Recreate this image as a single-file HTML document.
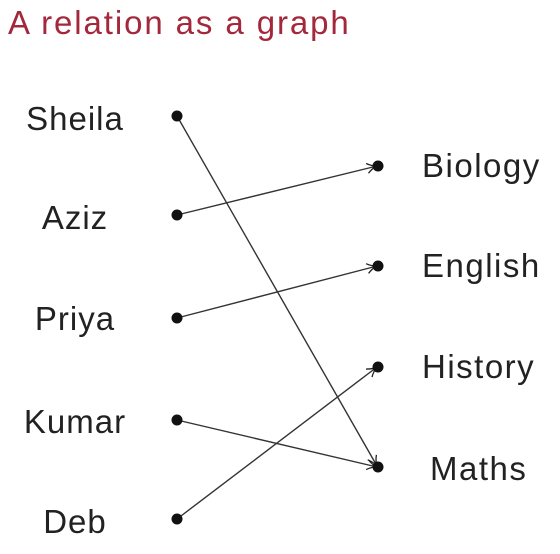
<html><body style="margin:0;background:#fff">
<svg width="560" height="554" xmlns="http://www.w3.org/2000/svg" font-family="Liberation Sans, sans-serif">
<defs><marker id="a" viewBox="0 0 12 12" refX="11" refY="6" markerWidth="12" markerHeight="12" markerUnits="userSpaceOnUse" orient="auto"><path d="M1 1 Q6 5 11 6 Q6 7 1 11" fill="none" stroke="#222" stroke-width="1.3"/></marker></defs>
<text x="8" y="34" font-size="33" letter-spacing="1.9" fill="#a3283b">A relation as a graph</text>
<g font-size="33" fill="#222" letter-spacing="1">
<text x="75" y="130" text-anchor="middle">Sheila</text>
<text x="75" y="229" text-anchor="middle">Aziz</text>
<text x="75" y="330" text-anchor="middle">Priya</text>
<text x="75" y="433" text-anchor="middle">Kumar</text>
<text x="75" y="533" text-anchor="middle">Deb</text>
<text x="422" y="177" letter-spacing="1.5">Biology</text>
<text x="422" y="277" letter-spacing="1.5">English</text>
<text x="422" y="378" letter-spacing="1.5">History</text>
<text x="430" y="480" letter-spacing="1.5">Maths</text>
</g>
<g stroke="#333" stroke-width="1.4" marker-end="url(#a)">
<line x1="177" y1="116" x2="377" y2="466"/>
<line x1="177" y1="215" x2="377" y2="166"/>
<line x1="177" y1="318" x2="377" y2="266"/>
<line x1="177" y1="420" x2="377" y2="467"/>
<line x1="177" y1="519" x2="377" y2="367"/>
</g>
<g fill="#111">
<circle cx="177" cy="116" r="5.5"/><circle cx="177" cy="215" r="5.5"/><circle cx="177" cy="318" r="5.5"/><circle cx="177" cy="420" r="5.5"/><circle cx="177" cy="519" r="5.5"/>
<circle cx="378" cy="166" r="5.5"/><circle cx="378" cy="266" r="5.5"/><circle cx="378" cy="367" r="5.5"/><circle cx="378" cy="467" r="5.5"/>
</g>
</svg>
</body></html>
